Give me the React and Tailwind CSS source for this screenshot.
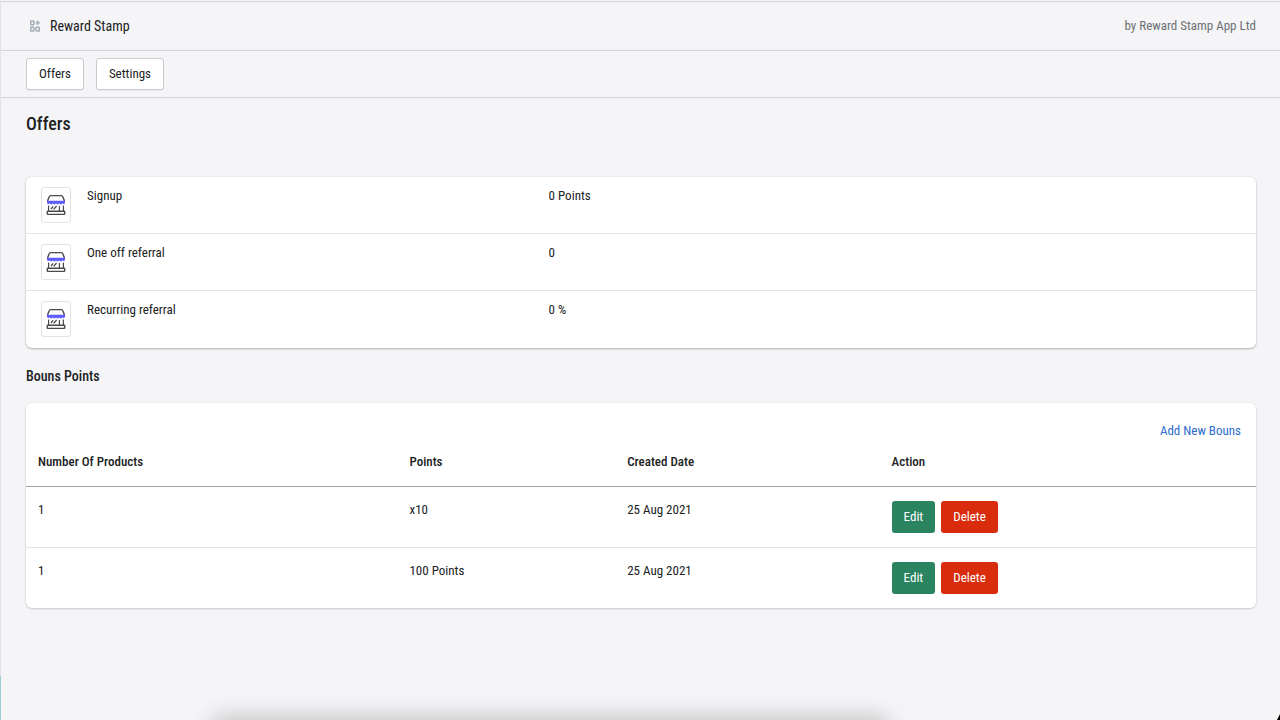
import React from 'react';

const offers = [
  { name: 'Signup', value: '0 Points' },
  { name: 'One off referral', value: '0' },
  { name: 'Recurring referral', value: '0 %' },
];

const bonuses = [
  { id: 1, products: '1', points: 'x10', created: '25 Aug 2021' },
  { id: 2, products: '1', points: '100 Points', created: '25 Aug 2021' },
];

const AppIcon = () => (
  <svg width="10" height="12" viewBox="0 0 10 12" fill="none" stroke="#a3adb8" strokeWidth="1.5" aria-hidden="true">
    <rect x="0.7" y="0.9" width="3.2" height="3.8" rx="0.6" />
    <rect x="0.7" y="7.3" width="3.2" height="3.8" rx="0.6" />
    <rect x="6.1" y="7.3" width="3.2" height="3.8" rx="0.6" />
    <path d="M7.7 0.6v4.4M5.7 2.8h4" />
  </svg>
);

const StoreIcon = () => (
  <svg width="20" height="22" viewBox="0 0 20 22" fill="none" aria-hidden="true">
    <path d="M1.5 7L3.2 2.8Q3.6 1.6 4.8 1.6H15.2Q16.4 1.6 16.8 2.8L18.5 7" stroke="#4a4a4a" strokeWidth="1.4" />
    <path d="M1 6.8H19V9Q17.8 11 16.4 9.2Q14.6 11.8 13.2 9.2Q11.6 11.8 10 9.2Q8.4 11.8 6.8 9.2Q5.4 11.8 3.6 9.2Q2.2 11 1 9Z" fill="#5f5bff" />
    <path d="M2.6 11.5V17.4M13.4 12V17.4M17.4 11.5V17.4" stroke="#4a4a4a" strokeWidth="1.2" />
    <path d="M5 15L7.2 12.4M7.6 15.4L10.6 12" stroke="#4a4a4a" strokeWidth="1.3" />
    <rect x="1.3" y="17.2" width="17.4" height="3.2" rx="0.6" stroke="#4a4a4a" strokeWidth="1.4" />
  </svg>
);

const NavButton = ({ children }) => (
  <button
    type="button"
    className="h-8 rounded-[3px] border border-[#c9cccf] bg-white px-3 shadow-[0_1px_0_rgba(0,0,0,0.05)]"
  >
    {children}
  </button>
);

const App = () => {
  return (
    <div className="relative overflow-hidden font-['Roboto_Condensed','Roboto','Liberation_Sans',sans-serif] text-[13px] leading-4 text-[#202223]">
      <div className="min-h-screen border-l border-[#e1e3e5] bg-[#f5f5f7] pt-px">
        <header className="flex h-[50px] items-center justify-between border-y border-[#d2d5d8] pr-6 pl-[29px]">
          <div className="flex items-center gap-2.5">
            <AppIcon />
            <span className="text-sm">Reward Stamp</span>
          </div>
          <span className="text-[#6d7175]">by Reward Stamp App Ltd</span>
        </header>

        <nav className="flex h-[47px] items-center gap-3 border-b border-[#d2d5d8] px-[25px]">
          <NavButton>Offers</NavButton>
          <NavButton>Settings</NavButton>
        </nav>

        <main className="pt-4 pr-6 pl-[25px]">
          <h1 className="text-lg leading-5 font-medium">Offers</h1>

          <ul className="mt-[43px] divide-y divide-[#e1e3e5] rounded-md bg-white shadow-[0_0_3px_rgba(23,24,24,0.08),0_1px_2px_rgba(0,0,0,0.25)]">
            {offers.map((offer) => (
              <li key={offer.name} className="flex h-[57px] gap-4 px-[15px] pt-2.5">
                <div className="flex h-9 w-[30px] shrink-0 items-center justify-center rounded-[3px] border border-[#e1e3e5]">
                  <StoreIcon />
                </div>
                <div className="flex flex-1 pt-px">
                  <span className="w-2/5">{offer.name}</span>
                  <span>{offer.value}</span>
                </div>
              </li>
            ))}
          </ul>

          <h2 className="mt-[18px] text-sm leading-5 font-medium">Bouns Points</h2>

          <section className="mt-[17px] rounded-md bg-white shadow-[0_0_3px_rgba(23,24,24,0.08),0_1px_2px_rgba(0,0,0,0.15)]">
            <div className="flex justify-end px-[15px] pt-5">
              <a href="#" className="text-[#2c6ecb]">Add New Bouns</a>
            </div>
            <table className="w-full table-fixed border-collapse text-left">
              <thead>
                <tr className="h-[47px] border-b border-[#a0a3a6]">
                  <th className="w-[30.2%] px-3 font-medium">Number Of Products</th>
                  <th className="w-[17.7%] px-3 font-medium">Points</th>
                  <th className="w-[21.5%] px-3 font-medium">Created Date</th>
                  <th className="px-3 font-medium">Action</th>
                </tr>
              </thead>
              <tbody className="divide-y divide-[#e1e3e5]">
                {bonuses.map((bonus) => (
                  <tr key={bonus.id} className="h-[61px] align-top">
                    <td className="px-3 pt-[15px]">{bonus.products}</td>
                    <td className="px-3 pt-[15px]">{bonus.points}</td>
                    <td className="px-3 pt-[15px]">{bonus.created}</td>
                    <td className="px-3 pt-3.5">
                      <div className="flex gap-1.5">
                        <button type="button" className="h-8 rounded-[3px] bg-[#2a8460] px-3 text-white">
                          Edit
                        </button>
                        <button type="button" className="h-8 rounded-[3px] bg-[#d82c0d] px-3 text-white">
                          Delete
                        </button>
                      </div>
                    </td>
                  </tr>
                ))}
              </tbody>
            </table>
          </section>
        </main>
      </div>

      {/* desktop edges around the window: dock shadow, wallpaper strip, corner */}
      <div className="absolute -bottom-5 left-[17%] h-4 w-[52%] rounded-full shadow-[0_0_22px_8px_rgba(0,0,0,0.2)]" />
      <div className="absolute bottom-0 left-0 h-11 w-px bg-[#9ccbd3]" />
      <div className="absolute right-0 bottom-0 h-1.5 w-[3px] bg-black [clip-path:polygon(100%_0,100%_100%,0_100%)]" />
    </div>
  );
};

export default App;
